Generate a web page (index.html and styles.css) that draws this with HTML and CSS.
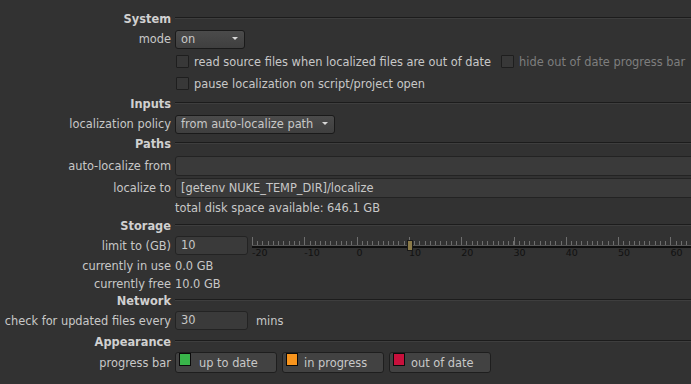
FILE: index.html
```html
<!DOCTYPE html>
<html lang="en">
<head>
  <meta charset="UTF-8">
  <title>Localization Preferences</title>
  <link rel="stylesheet" href="styles.css">
</head>
<body>
  <div class="panel">
    <div class="label section">System</div>
    <div class="rule"></div>

    <div class="label">mode</div>
    <div class="field"><div class="dropdown dd-mode">on</div></div>

    <div class="label"></div>
    <div class="field">
      <span class="check"></span><span>read source files when localized files are out of date</span>
      <span class="check check-second"></span><span class="muted">hide out of date progress bar</span>
    </div>

    <div class="label"></div>
    <div class="field"><span class="check"></span><span>pause localization on script/project open</span></div>

    <div class="label section">Inputs</div>
    <div class="rule"></div>

    <div class="label">localization policy</div>
    <div class="field"><div class="dropdown dd-policy">from auto-localize path</div></div>

    <div class="label section">Paths</div>
    <div class="rule"></div>

    <div class="label">auto-localize from</div>
    <div class="field"><div class="text text-wide"></div></div>

    <div class="label">localize to</div>
    <div class="field"><div class="text text-wide">[getenv NUKE_TEMP_DIR]/localize</div></div>

    <div class="label"></div>
    <div class="field">total disk space available: 646.1 GB</div>

    <div class="label section">Storage</div>
    <div class="rule"></div>

    <div class="label">limit to (GB)</div>
    <div class="field">
      <div class="text text-num">10</div>
      <div class="slider">
        <div class="ticks"></div>
        <div class="track"></div>
        <div class="scale">
          <span>-20</span><span>-10</span><span>0</span><span>10</span><span>20</span><span>30</span><span>40</span><span>50</span><span>60</span>
        </div>
        <div class="handle"></div>
      </div>
    </div>

    <div class="label">currently in use</div>
    <div class="field">0.0 GB</div>

    <div class="label">currently free</div>
    <div class="field">10.0 GB</div>

    <div class="label section">Network</div>
    <div class="rule"></div>

    <div class="label">check for updated files every</div>
    <div class="field"><div class="text text-num">30</div><span class="unit">mins</span></div>

    <div class="label section">Appearance</div>
    <div class="rule"></div>

    <div class="label">progress bar</div>
    <div class="field buttons">
      <div class="color-btn btn-first"><span class="swatch green"></span>up to date</div>
      <div class="color-btn"><span class="swatch orange"></span>in progress</div>
      <div class="color-btn"><span class="swatch red"></span>out of date</div>
    </div>
  </div>
</body>
</html>
```

FILE: styles.css
```css
body {
  margin: 0;
  background: #323232;
  font-family: 'DejaVu Sans', Verdana, sans-serif;
  font-size: 11.4px;
  color: #c8c8c8;
  overflow: hidden;
}
.panel {
  display: grid;
  grid-template-columns: 171px 1fr;
  grid-template-rows: 19px 22px 23px 21px 20px 20px 20px 23px 22px 18px 18px 21px 20px 16px 18px 21px 21px 21px;
  column-gap: 4px;
  align-items: center;
  padding-top: 9px;
}
.label {
  text-align: right;
  white-space: nowrap;
}
.section {
  font-weight: bold;
  color: #d0d0d0;
}
.rule {
  height: 0;
  border-top: 1px solid #1c1c1c;
  border-bottom: 1px solid #3e3e3e;
  margin-top: -2px;
}
.field {
  display: flex;
  align-items: center;
  white-space: nowrap;
  min-width: 0;
}
.dropdown {
  position: relative;
  box-sizing: border-box;
  height: 19px;
  line-height: 17px;
  padding-left: 5px;
  border: 1px solid #1a1a1a;
  border-radius: 3px;
  background: linear-gradient(#4b4b4b, #3f3f3f);
}
.dropdown::after {
  content: '';
  position: absolute;
  right: 6px;
  top: 6px;
  border-left: 3px solid transparent;
  border-right: 3px solid transparent;
  border-top: 3px solid #d8d8d8;
}
.dd-mode {
  width: 70px;
}
.dd-policy {
  width: 160px;
}
.check {
  flex: none;
  box-sizing: border-box;
  width: 13px;
  height: 13px;
  margin: 0 5px 0 1px;
  border: 1px solid #1e1e1e;
  border-radius: 1px;
  background: #383838;
}
.check-second {
  margin-left: 10px;
}
.muted {
  color: #7e7e7e;
}
.text {
  box-sizing: border-box;
  height: 20px;
  line-height: 18px;
  padding-left: 5px;
  border: 1px solid #232323;
  border-radius: 3px;
  background: #3a3a3a;
}
.text-wide {
  flex: 1;
  margin-right: -10px;
}
.text-num {
  flex: none;
  width: 73px;
  height: 19px;
  line-height: 17px;
}
.unit {
  margin-left: 8px;
}
.slider {
  position: relative;
  flex: none;
  width: 470px;
  height: 20px;
  margin-left: 4px;
}
.ticks {
  height: 8px;
  margin-top: 1px;
  background:
    repeating-linear-gradient(to right, #6e6e6e 0 1px, transparent 1px 5.23px) left bottom / 100% 4px no-repeat,
    repeating-linear-gradient(to right, #6e6e6e 0 1px, transparent 1px 52.3px);
}
.track {
  height: 2px;
  background: #0e0e0e;
  border-top: 1px solid #555;
}
.scale {
  display: flex;
  font-size: 9.5px;
  line-height: 10px;
  color: #111;
}
.scale span {
  flex: none;
  width: 52.3px;
}
.handle {
  position: absolute;
  left: 155px;
  top: 4px;
  box-sizing: border-box;
  width: 6px;
  height: 11px;
  border: 1px solid #1a1a1a;
  background: #8b7a48;
}
.buttons {
  gap: 5px;
}
.color-btn {
  box-sizing: border-box;
  display: flex;
  align-items: center;
  width: 102px;
  height: 21px;
  padding: 0 0 0 3px;
  border: 1px solid #1e1e1e;
  border-radius: 3px;
  background: #424242;
}
.swatch {
  box-sizing: border-box;
  align-self: flex-start;
  width: 12px;
  height: 13px;
  margin-right: 6px;
  border: 1px solid #0a0a0a;
}
.btn-first .swatch {
  margin-right: 8px;
}
.green {
  background: #39b54a;
}
.orange {
  background: #f7941d;
}
.red {
  background: #c8103c;
}
```
